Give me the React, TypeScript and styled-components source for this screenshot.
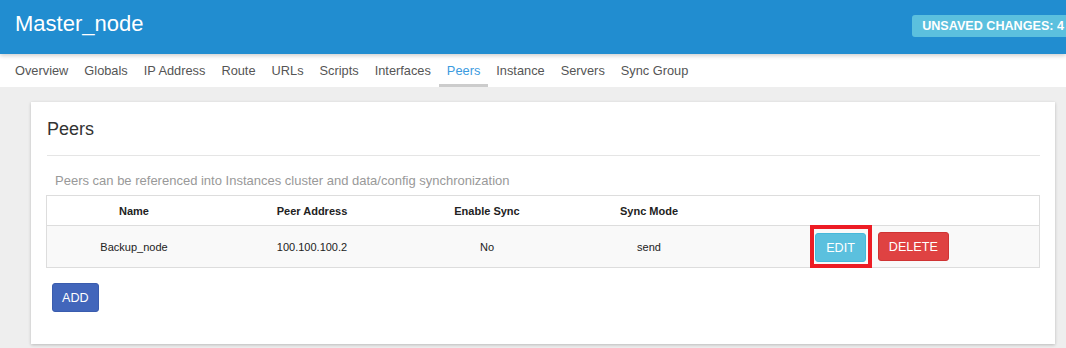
import React from "react";
import styled, { createGlobalStyle } from "styled-components";

const Global = createGlobalStyle`
  html, body { margin: 0; padding: 0; }
  body {
    font-family: "Liberation Sans", Arial, sans-serif;
    background: #eeeeee;
    overflow: hidden;
    width: 1066px;
    height: 348px;
  }
`;

const Header = styled.header`
  height: 54px;
  background: #218dd0;
  display: flex;
  align-items: flex-start;
  justify-content: space-between;
  position: relative;
  z-index: 2;
  box-shadow: 0 2px 4px rgba(0, 0, 0, 0.18);
  overflow: hidden;
`;

const Title = styled.h1`
  margin: 0;
  padding: 11px 0 0 15px;
  font-size: 22px;
  font-weight: normal;
  color: #ffffff;
  line-height: 26px;
`;

const Badge = styled.span`
  margin-top: 15px;
  margin-right: -8px;
  height: 22px;
  padding: 0 10px;
  display: flex;
  align-items: center;
  background: #5bc0de;
  border-radius: 3px;
  color: #ffffff;
  font-weight: bold;
  font-size: 12.6px;
  white-space: nowrap;
`;

const Nav = styled.nav`
  height: 33px;
  background: #ffffff;
  display: flex;
  align-items: stretch;
  padding-left: 7px;
`;

const NavItem = styled.a<{ $active?: boolean }>`
  display: flex;
  align-items: center;
  padding: 2px 8px 0;
  font-size: 12.8px;
  color: ${(p) => (p.$active ? "#3b9be0" : "#555555")};
  border-bottom: 3px solid ${(p) => (p.$active ? "#cccccc" : "transparent")};
  text-decoration: none;
  box-sizing: border-box;
  height: 33px;
`;

const Main = styled.main`
  padding: 15px 11px 0 31px;
`;

const Card = styled.section`
  background: #ffffff;
  box-shadow: 0 1px 3px rgba(0, 0, 0, 0.22);
  padding: 16px 15px 31px 16px;
  height: 242px;
  box-sizing: border-box;
`;

const CardTitle = styled.h2`
  margin: 0;
  font-size: 18px;
  font-weight: normal;
  color: #333333;
  line-height: 20px;
  padding-top: 1px;
`;

const Rule = styled.hr`
  border: 0;
  border-top: 1px solid #e5e5e5;
  margin: 16px 0 0 0;
`;

const Description = styled.p`
  margin: 17px 0 0 8px;
  font-size: 13px;
  color: #999999;
  line-height: 15px;
`;

const Table = styled.table`
  margin: 7px 0 0 -1px;
  width: 994px;
  border-collapse: collapse;
  border: 1px solid #dddddd;
  table-layout: fixed;
  font-size: 11px;
  color: #222222;
`;

const Th = styled.th<{ $w: number }>`
  width: ${(p) => p.$w}px;
  height: 29px;
  padding: 0;
  font-weight: bold;
  text-align: center;
  border-bottom: 1px solid #dddddd;
`;

const Row = styled.tr`
  background: #f9f9f9;
`;

const Td = styled.td`
  height: 41px;
  padding: 0;
  text-align: center;
`;

const Actions = styled.div`
  display: flex;
  justify-content: center;
  align-items: center;
  gap: 6px;
  padding-right: 7px;
`;

const Highlight = styled.span`
  display: inline-flex;
  margin: -1px 0;
  border: 4px solid #ed1c24;
  padding: 4px 2px 2px 1px;
`;

const Btn = styled.button<{ $bg: string; $border: string }>`
  height: 29px;
  padding: 0 10px;
  font-family: "Liberation Sans", Arial, sans-serif;
  font-size: 12.6px;
  color: #ffffff;
  background: ${(p) => p.$bg};
  border: 1px solid ${(p) => p.$border};
  border-radius: 3px;
  cursor: pointer;
`;

const AddBtn = styled(Btn)`
  margin: 15px 0 0 5px;
  height: 29px;
  padding: 0 9px;
`;

const tabs = [
  "Overview",
  "Globals",
  "IP Address",
  "Route",
  "URLs",
  "Scripts",
  "Interfaces",
  "Peers",
  "Instance",
  "Servers",
  "Sync Group",
];

const cols = [
  { label: "Name", w: 174 },
  { label: "Peer Address", w: 182 },
  { label: "Enable Sync", w: 168 },
  { label: "Sync Mode", w: 156 },
  { label: "", w: 312 },
];

export default function App() {
  return (
    <>
      <Global />
      <Header>
        <Title>Master_node</Title>
        <Badge>UNSAVED CHANGES: 4</Badge>
      </Header>
      <Nav>
        {tabs.map((t) => (
          <NavItem key={t} $active={t === "Peers"}>
            {t}
          </NavItem>
        ))}
      </Nav>
      <Main>
        <Card>
          <CardTitle>Peers</CardTitle>
          <Rule />
          <Description>
            Peers can be referenced into Instances cluster and data/config synchronization
          </Description>
          <Table>
            <thead>
              <tr>
                {cols.map((c, i) => (
                  <Th key={i} $w={c.w}>
                    {c.label}
                  </Th>
                ))}
              </tr>
            </thead>
            <tbody>
              <Row>
                <Td>Backup_node</Td>
                <Td>100.100.100.2</Td>
                <Td>No</Td>
                <Td>send</Td>
                <Td>
                  <Actions>
                    <Highlight>
                      <Btn $bg="#5bc0de" $border="#46b8da">
                        EDIT
                      </Btn>
                    </Highlight>
                    <Btn $bg="#df4242" $border="#cf3333">
                      DELETE
                    </Btn>
                  </Actions>
                </Td>
              </Row>
            </tbody>
          </Table>
          <AddBtn $bg="#4266bb" $border="#3a5cae">
            ADD
          </AddBtn>
        </Card>
      </Main>
    </>
  );
}
